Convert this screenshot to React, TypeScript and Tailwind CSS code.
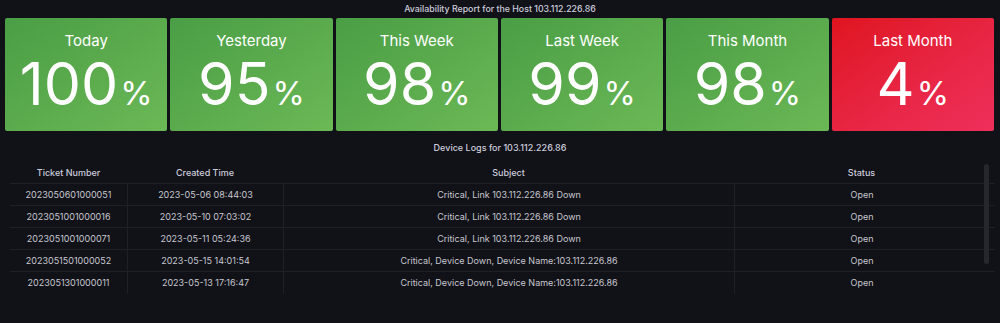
import React from 'react';

const stats = [
  { label: 'Today', value: '100', red: false },
  { label: 'Yesterday', value: '95', red: false },
  { label: 'This Week', value: '98', red: false },
  { label: 'Last Week', value: '99', red: false },
  { label: 'This Month', value: '98', red: false },
  { label: 'Last Month', value: '4', red: true },
];

const logs = [
  ['2023050601000051', '2023-05-06 08:44:03', 'Critical, Link 103.112.226.86 Down', 'Open'],
  ['2023051001000016', '2023-05-10 07:03:02', 'Critical, Link 103.112.226.86 Down', 'Open'],
  ['2023051001000071', '2023-05-11 05:24:36', 'Critical, Link 103.112.226.86 Down', 'Open'],
  ['2023051501000052', '2023-05-15 14:01:54', 'Critical, Device Down, Device Name:103.112.226.86', 'Open'],
  ['2023051301000011', '2023-05-13 17:16:47', 'Critical, Device Down, Device Name:103.112.226.86', 'Open'],
];

const App = () => {
  return (
    <div className="w-[1000px] h-[323px] bg-[#111217] text-[#ccccdc] font-['Inter',sans-serif] overflow-hidden">
      {/* Availability stats */}
      <div className="h-[18px] flex items-center justify-center text-[8.8px] font-medium text-[#ccccdc]">
        Availability Report for the Host 103.112.226.86
      </div>
      <div className="flex gap-[3px] pl-[5px] pr-[6px]">
        {stats.map((s) => (
          <div
            key={s.label}
            className={`flex-1 h-[113px] rounded-[2px] flex flex-col items-center text-white ${
              s.red
                ? 'bg-linear-to-br from-[#df141d] to-[#ef2f5b]'
                : 'bg-linear-to-br from-[#4a9e45] to-[#6bb856]'
            }`}
          >
            <div className="mt-[13px] text-[15px] leading-[20px]">{s.label}</div>
            <div className="flex items-baseline mt-[10px]">
              <span className="text-[59px] leading-[46px]">{s.value}</span>
              <span className="text-[33px] leading-[46px] ml-[2px]">%</span>
            </div>
          </div>
        ))}
      </div>

      {/* Device logs table */}
      <div className="mt-[10px] h-[14px] flex items-center justify-center text-[9px] font-medium">
        Device Logs for 103.112.226.86
      </div>
      <div className="relative mt-[7px] pl-[10px] pr-[11px]">
        <div className="grid grid-cols-[117px_156px_451px_1fr] h-[22px] items-center text-[9px] font-medium border-b border-[#1f2026] mr-[-6px]">
          <div className="text-center">Ticket Number</div>
          <div className="text-center">Created Time</div>
          <div className="text-center">Subject</div>
          <div className="text-center pr-[6px]">Status</div>
        </div>
        {logs.map((row, i) => (
          <div
            key={row[0]}
            className={`grid grid-cols-[117px_156px_451px_1fr] h-[22px] items-stretch text-[9px] text-[#c7c7d1] mr-[-6px] ${
              i < logs.length - 1 ? 'border-b border-[#1f2026]' : ''
            }`}
          >
            <div className="flex items-center justify-center">{row[0]}</div>
            <div className="flex items-center justify-center border-l border-[#1f2026]">{row[1]}</div>
            <div className="flex items-center justify-center border-l border-[#1f2026]">{row[2]}</div>
            <div className="flex items-center justify-center border-l border-[#1f2026] pr-[6px]">{row[3]}</div>
          </div>
        ))}
        <div className="absolute right-[11px] top-[2px] w-[5px] h-[100px] rounded-full bg-[#26272d]" />
      </div>
    </div>
  );
};

export default App;
